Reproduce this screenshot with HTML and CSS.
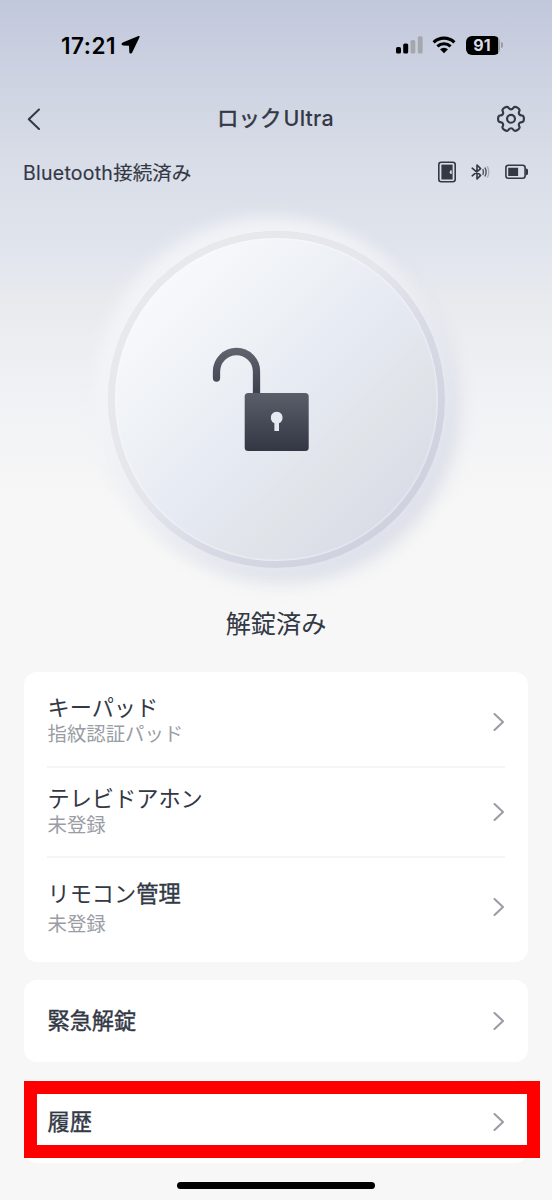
FILE: index.html
```html
<!DOCTYPE html>
<html lang="ja">
<head>
<meta charset="utf-8">
<title>ロックUltra</title>
<link rel="stylesheet" href="styles.css">
</head>
<body>
<div class="screen">
  <div class="status">
    <div class="clock"><span class="time">17:21</span>
      <svg width="20" height="20" viewBox="0 0 20 20"><path d="M17.500 1 1.700 7.500c-1.700.8-1.400 2.900.4 3l5.900.3.300 6.200c.1 1.900 2.200 2.200 2.900.5L18.600 2.100c.3-.8-.3-1.400-1.100-1.100z"/></svg>
    </div>
    <div class="signals">
      <svg width="27" height="18" viewBox="0 0 27 18"><rect x="0" y="11" width="5" height="6.500" rx="1.600"/><rect x="7.200" y="7.500" width="5" height="10" rx="1.600"/><rect class="dim" x="14.500" y="4" width="4.800" height="13.500" rx="1.600"/><rect class="dim" x="21.800" y="0.300" width="4.800" height="17.200" rx="1.600"/></svg>
      <svg class="wifi" width="24" height="18" viewBox="0 0 24 18"><path class="arc" d="M1.600 6.300a15.200 15.200 0 0 1 20.800 0M5.400 10.400a9.600 9.600 0 0 1 13.200 0"/><path d="M12 17.200 8 13.300a5.900 5.900 0 0 1 8 0z"/></svg>
      <div class="power"><span>91</span></div>
      <i class="nub"></i>
    </div>
  </div>
  <header class="nav">
    <svg class="line back" width="14" height="22" viewBox="0 0 14 22"><path d="M12 1.500 1.800 11.200 12 21"/></svg>
    <h1>ロック<span>Ultra</span></h1>
    <svg class="line gear" width="28" height="28" viewBox="-.5 -.3 29 29"><path d="M27.400 14Q27.400 17.300 25.300 17.400Q23.200 17.500 22.450 18.850Q21.700 20.200 22.650 22.050Q23.600 23.900 20.700 25.600Q17.800 27.300 16.650 25.550Q15.500 23.800 14 23.800Q12.500 23.800 11.350 25.550Q10.200 27.300 7.300 25.600Q4.400 23.900 5.350 22.050Q6.300 20.200 5.550 18.850Q4.800 17.500 2.700 17.400Q.6 17.300 .6 14Q.6 10.700 2.700 10.600Q4.800 10.500 5.550 9.150Q6.300 7.800 5.350 5.950Q4.400 4.100 7.300 2.400Q10.200 .7 11.350 2.450Q12.500 4.200 14 4.200Q15.500 4.200 16.650 2.450Q17.800 .7 20.700 2.400Q23.600 4.100 22.650 5.950Q21.700 7.800 22.450 9.150Q23.200 10.500 25.300 10.600Q27.400 10.700 27.400 14Z"/><circle cx="14" cy="14" r="4.100"/></svg>
  </header>
  <div class="connection">
    <span><i>Bluetooth</i>接続済み</span>
    <div class="states">
      <svg width="18" height="22" viewBox="0 0 18 22"><rect class="thin" x=".8" y="1.300" width="16.400" height="19.400" rx="2.400"/><path d="M3.400 3.600h11.200v14.900H3.400z"/><path class="knob" d="M13.700 9.300v3.800h-1.200l-.8-1.900.8-1.900z"/></svg>
      <svg class="bt" width="19" height="18" viewBox="0 0 19 18"><path class="thin" d="M1.200 5.200 9.600 12.400 6 16V2l3.600 3.600L1.200 12.800"/><path class="wave" d="M11.800 6.100q1.400 2.900 0 5.800"/><path class="wave" d="M13.900 4.500q2.400 4.500 0 9"/><path class="wave faint" d="M16.300 3.200q3 5.800 0 11.600"/></svg>
      <svg width="23" height="16" viewBox="0 0 23 16"><rect class="thin" x=".9" y="1.300" width="19.200" height="13" rx="2.500"/><path d="M3.200 3.700h9.900v8.200H3.200zM21 4.300l2 1.200v4.700l-2 1.200z"/></svg>
    </div>
  </div>
  <div class="dial">
    <svg width="98" height="106" viewBox="0 0 98 106">
      <defs>
        <linearGradient id="shackle" x1="0" y1="0" x2="0" y2="1"><stop offset="0" stop-color="#5d626d"/><stop offset="1" stop-color="#3b3f4c"/></linearGradient>
        <linearGradient id="case" x1="0" y1="0" x2="0" y2="1"><stop offset="0" stop-color="#5a5e69"/><stop offset="1" stop-color="#333744"/></linearGradient>
      </defs>
      <path d="M4.500 31V24.500a20 20 0 0 1 40 0V48" fill="none" stroke="url(#shackle)" stroke-width="7.300" stroke-linecap="round"/>
      <rect x="32.700" y="46" width="64" height="58" rx="3.500" fill="url(#case)"/>
      <path d="M62.400 76.200a6 6 0 1 1 4.600 0v7.800h-4.600z" fill="#e5e9f2"/>
    </svg>
  </div>
  <p class="result">解錠済み</p>
  <main class="menu">
    <section class="card">
      <div class="row keypad"><div><h2>キーパッド</h2><p>指紋認証パッド</p></div><svg class="go" width="12" height="20" viewBox="0 0 12 20"><path d="M1.500 2 10 10 1.500 18"/></svg></div>
      <div class="row doorphone"><div><h2>テレビドアホン</h2><p>未登録</p></div><svg class="go" width="12" height="20" viewBox="0 0 12 20"><path d="M1.500 2 10 10 1.500 18"/></svg></div>
      <div class="row remote"><div><h2>リモコン<b>管理</b></h2><p>未登録</p></div><svg class="go" width="12" height="20" viewBox="0 0 12 20"><path d="M1.500 2 10 10 1.500 18"/></svg></div>
    </section>
    <section class="card single"><div class="row"><h2><b>緊急解錠</b></h2><svg class="go" width="12" height="20" viewBox="0 0 12 20"><path d="M1.500 2 10 10 1.500 18"/></svg></div></section>
    <section class="card single history"><div class="row"><h2><b>履歴</b></h2><svg class="go" width="12" height="20" viewBox="0 0 12 20"><path d="M1.500 2 10 10 1.500 18"/></svg></div><div class="highlight"></div></section>
  </main>
  <div class="home"></div>
</div>
</body>
</html>
```
FILE: styles.css
```css
* { box-sizing: border-box; }
body { margin: 0; }
h1, h2, p { margin: 0; font-weight: 400; }
svg { display: block; flex: none; }

.screen {
  width: 552px;
  height: 1200px;
  overflow: hidden;
  display: flex;
  flex-direction: column;
  font-family: Inter, "Noto Sans CJK JP", sans-serif;
  color: #333845;
  background: linear-gradient(180deg, #c2c8dc 0, #cdd3e1 80px, #d8dde7 160px, #e0e4ed 245px, #e8eaee 300px, #f1f2f5 400px, #f7f7f7 510px);
}

.status {
  height: 90px;
  padding: 0 49px 0 61px;
  display: flex;
  align-items: center;
  justify-content: space-between;
  color: #000;
}
.clock { display: flex; align-items: center; gap: 5px; }
.time { font-size: 22.5px; font-weight: 600; letter-spacing: 0.5px; }
.signals { display: flex; align-items: center; }
.dim { fill: #a5a7ae; }
.wifi { margin-left: 9px; }
.arc { fill: none; stroke: #000; stroke-width: 3.2; }
.power {
  width: 34px;
  height: 19px;
  margin-left: 10px;
  padding-right: 2px;
  border-radius: 6px;
  background: linear-gradient(90deg, #000 31.5px, #9a9ca5 31.5px);
  color: #d8dce9;
  font-size: 16px;
  font-weight: 700;
  line-height: 19px;
  text-align: center;
}
.nub { width: 2px; height: 6px; margin-left: 1px; border-radius: 0 2px 2px 0; background: #9a9ca5; }

.nav {
  height: 57px;
  padding: 0 27px;
  display: flex;
  align-items: center;
  justify-content: space-between;
}
.line { fill: none; stroke: #333845; stroke-width: 2; stroke-linecap: round; stroke-linejoin: round; }
.gear { stroke-width: 2.2; }
.nav h1 { font-size: 21.5px; line-height: 30px; padding: 0 0 1px 13px; -webkit-text-stroke: 0.5px #333845; }
.nav h1 span { font-weight: 500; margin-left: 2px; letter-spacing: 0.2px; -webkit-text-stroke: 0; }

.connection {
  height: 50px;
  padding: 0 24px 0 23px;
  display: flex;
  align-items: center;
  justify-content: space-between;
  font-size: 19.5px;
  -webkit-text-stroke: 0.15px #333845;
}
.connection span { padding-bottom: 2px; }
.connection i { font-style: normal; letter-spacing: 0.25px; }
.states { display: flex; align-items: center; gap: 15px; fill: #333845; }
.thin { fill: none; stroke: #333845; stroke-width: 1.6; stroke-linejoin: round; stroke-linecap: round; }
.knob { fill: #dbe0e9; }
.wave { fill: none; stroke: #4b505c; stroke-width: 1.4; }
.faint { stroke: #a9adb8; }

.dial {
  width: 337px;
  height: 337px;
  margin: 34px 0 0 108px;
  flex: none;
  display: flex;
  align-items: center;
  justify-content: center;
  border: 7px solid transparent;
  border-radius: 50%;
  background:
    linear-gradient(135deg, #f6f8fc 16%, #eef1f5 35%, #e5e9f2 54%, #e0e3e8 70%, #d9dce7 88%) padding-box,
    linear-gradient(135deg, #e8e9ec 15%, #e4e6ec 45%, #d7dae5 62%, #cdd0dd 90%) border-box;
  box-shadow: inset 0 0 2px 1px rgba(255, 255, 255, 0.45), -7px -8px 18px 6px rgba(244, 245, 247, 0.8), 9px 10px 18px 4px rgba(209, 214, 227, 0.7), 0 0 16px 8px rgba(239, 241, 246, 0.8);
}
.dial svg { margin-left: -31px; }

.result {
  height: 104px;
  padding-top: 37px;
  line-height: 38px;
  text-align: center;
  font-size: 25.2px;
}

.menu { display: flex; flex-direction: column; gap: 18px; padding: 0 24px; }
.card { border-radius: 13px; background: #fff; padding: 0 23px; }
.row { display: flex; align-items: center; justify-content: space-between; }
.row h2 { font-size: 22.2px; line-height: 28px; padding-left: 0.5px; }
.row b { font-weight: 400; -webkit-text-stroke: 0.4px #333845; }
.row p { font-size: 19.4px; line-height: 24px; padding-left: 0.5px; color: #9a9da5; }
.keypad { height: 96px; padding-top: 6px; border-bottom: 2px solid #f5f5f6; }
.keypad > div { margin-top: -4px; }
.doorphone { height: 90px; border-bottom: 2px solid #f5f5f6; }
.doorphone > div { margin-top: -3px; }
.remote { height: 104px; padding-bottom: 6px; }
.remote > div { margin-top: 2px; }
.remote p { margin-top: 4px; }
.go { fill: none; stroke: #9a9da6; stroke-width: 2.1; stroke-linecap: round; stroke-linejoin: round; }
.single .row { height: 82px; }
.history { position: relative; }
.history .row { height: 83px; }
.highlight {
  position: absolute;
  left: 0;
  top: 1px;
  width: 515.5px;
  height: 77px;
  border: 13px solid #f00;
}

.home { width: 198px; height: 7px; margin: 19px 0 0 177px; border-radius: 4px; background: #000; }
```
